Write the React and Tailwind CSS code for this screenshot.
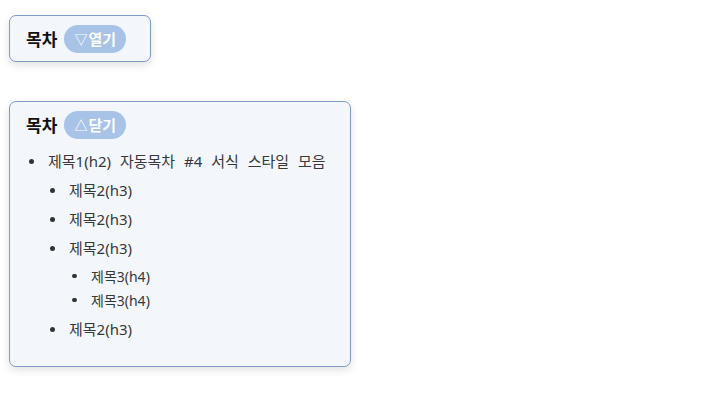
import React, { useState } from "react";

const ITEMS = [
  {
    text: "제목1(h2) 자동목차 #4 서식 스타일 모음",
    children: [
      { text: "제목2(h3)" },
      { text: "제목2(h3)" },
      { text: "제목2(h3)", children: [{ text: "제목3(h4)" }, { text: "제목3(h4)" }] },
      { text: "제목2(h3)" },
    ],
  },
];

function Bullet({ size = 5 }) {
  return <span className="inline-block rounded-full bg-[#333]" style={{ width: size, height: size }} />;
}

function TocBox({ open, onToggle, width }) {
  return (
    <div
      className={`rounded-[7px] border border-[#809bc3] bg-[#f3f7fc] shadow-[0_3px_8px_rgba(0,0,0,0.12)] ${width}`}
    >
      <div className="flex items-center h-[45px] pl-4">
        <span className="text-[17px] font-bold text-[#111] leading-none">목차</span>
        <button
          onClick={onToggle}
          className="ml-[7px] h-[28px] w-[62px] rounded-full bg-[#a7c3e7] text-white text-[15px] font-bold flex items-center justify-center leading-none"
        >
          <span className="text-[13px] mr-[1px]">{open ? "△" : "▽"}</span>
          {open ? "닫기" : "열기"}
        </button>
      </div>
      {open && (
        <ul
          className="pl-[19px] pb-[22px] text-[15px] text-[#383838] [word-spacing:5px]"
          style={{ fontFamily: '"Noto Sans", "Noto Sans CJK KR", sans-serif' }}
        >
          {ITEMS.map((a, i) => (
            <li key={i}>
              <div className="flex items-center h-[29px]">
                <span className="w-[19px] flex"><Bullet /></span>
                <span>{a.text}</span>
              </div>
              <ul className="pl-[21px]">
                {a.children.map((b, j) => (
                  <li key={j}>
                    <div className="flex items-center h-[29px]">
                      <span className="w-[19px] flex"><Bullet /></span>
                      <span>{b.text}</span>
                    </div>
                    {b.children && (
                      <ul className="pl-[22px] text-[14px] pt-[1px] pb-[3px]">
                        {b.children.map((c, k) => (
                          <li key={k} className="flex items-center h-[24px]">
                            <span className="w-[19px] flex"><Bullet size={4.5} /></span>
                            <span>{c.text}</span>
                          </li>
                        ))}
                      </ul>
                    )}
                  </li>
                ))}
              </ul>
            </li>
          ))}
        </ul>
      )}
    </div>
  );
}

export default function App() {
  const [first, setFirst] = useState(false);
  const [second, setSecond] = useState(true);
  return (
    <div
      className="w-[710px] h-[400px] bg-white pl-[9px] pt-[15px]"
      style={{ fontFamily: '"Noto Sans CJK KR", "Noto Sans", sans-serif' }}
    >
      <div className="flex">
        <TocBox open={first} onToggle={() => setFirst(!first)} width="w-[142px]" />
      </div>
      <div className="flex mt-[39px]">
        <TocBox open={second} onToggle={() => setSecond(!second)} width="w-[342px]" />
      </div>
    </div>
  );
}
